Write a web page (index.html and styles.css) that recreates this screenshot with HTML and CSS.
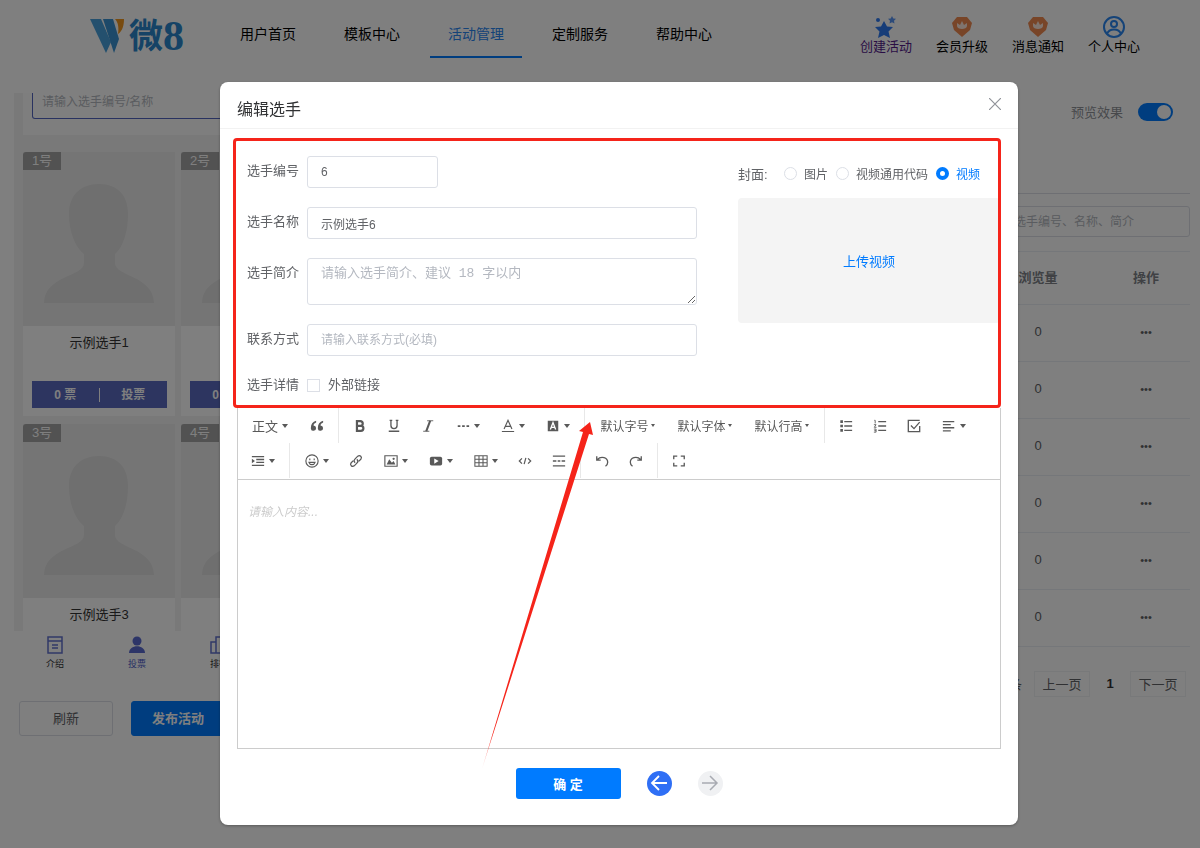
FILE: index.html
```html
<!DOCTYPE html>
<html lang="zh-CN">
<head>
<meta charset="utf-8">
<title>编辑选手</title>
<link rel="stylesheet" href="styles.css">
</head>
<body>
  <svg class="sprite" aria-hidden="true">
    <symbol id="person" viewBox="0 0 152 174">
      <path d="M76 32c19 0 29 12 29 30 0 16-4 32-13 40v9c0 14 38 12 39 40H21c1-28 40-26 40-40v-9c-10-8-15-24-15-40 0-18 11-30 30-30z"/>
    </symbol>
    <symbol id="gem" viewBox="-1 -1 22 22">
      <path d="M5 0h10l5 6-2 7-8 7-8-7-2-7z" fill="#f08a50"/>
      <path d="M5 6l3 2 2-4 2 4 3-2v3c0 4-10 4-10 0z" fill="#ffe9dc"/>
    </symbol>
  </svg>

  <header class="header">
    <a class="logo" href="#">
      <svg width="34" height="36" viewBox="0 0 34 36">
        <path d="M0 1h11l10 23-5 11z" fill="#48a0dc"/>
        <path d="M13 1h10l6 20-5 14z" fill="#3b93d2"/>
        <path d="M25 1h9c0 5-1 12-6 15 1-7 0-12-3-15z" fill="#f0961e"/>
      </svg>
      <span class="logo-text">微<b>8</b></span>
    </a>
    <nav class="nav">
      <a href="#">用户首页</a>
      <a href="#">模板中心</a>
      <a href="#" class="active">活动管理</a>
      <a href="#">定制服务</a>
      <a href="#">帮助中心</a>
    </nav>
    <div class="shortcuts">
      <a href="#" class="visited">
        <svg width="22" height="22" viewBox="0 0 22 22" fill="#2f7af0"><path d="M9 5l3 5.500 6 .5-4.500 4.500 1.500 6.500-6-3-6 3 1.500-6.500L0 11l6-.5z"/><circle cx="3" cy="4" r="2"/><path d="M17 0l1.300 2.500 2.700.3-2 2 .5 2.700L17 6.200l-2.500 1.300.5-2.700-2-2 2.700-.3z" opacity=".8"/></svg>
        创建活动
      </a>
      <a href="#"><svg width="22" height="22"><use href="#gem"/></svg>会员升级</a>
      <a href="#"><svg width="22" height="22"><use href="#gem"/></svg>消息通知</a>
      <a href="#">
        <svg width="22" height="22" viewBox="0 0 22 22" fill="none" stroke="#2a86f0" stroke-width="2"><circle cx="11" cy="11" r="10"/><circle cx="11" cy="8" r="3"/><path d="M4 18c2-6 12-6 14 0"/></svg>
        个人中心
      </a>
    </div>
  </header>

  <main class="main">
    <section class="preview">
      <div class="phone">
        <div class="phone-search"><input type="text" placeholder="请输入选手编号/名称" aria-label="搜索选手"></div>
        <div class="cards">
          <div class="card">
            <span class="badge">1号</span>
            <svg class="photo"><use href="#person"/></svg>
            <p>示例选手1</p>
            <div class="vote"><span>0 票</span><button>投票</button></div>
          </div>
          <div class="card">
            <span class="badge">2号</span>
            <svg class="photo"><use href="#person"/></svg>
            <p></p>
            <div class="vote"><span>0 票</span></div>
          </div>
          <div class="card">
            <span class="badge">3号</span>
            <svg class="photo"><use href="#person"/></svg>
            <p>示例选手3</p>
          </div>
          <div class="card">
            <span class="badge">4号</span>
            <svg class="photo"><use href="#person"/></svg>
          </div>
        </div>
        <div class="tabs">
          <a href="#"><svg width="18" height="18" viewBox="0 0 18 18" fill="none" stroke="#6272d0" stroke-width="1.500"><path d="M2 1h14v16H2zM2 5h14M6 9h6M6 12h6"/></svg>介绍</a>
          <a href="#" class="on"><svg width="18" height="18" viewBox="0 0 18 18" fill="#5a6bd0"><circle cx="9" cy="5" r="4.500"/><path d="M1 17c0-9 16-9 16 0z"/></svg>投票</a>
          <a href="#"><svg width="18" height="18" viewBox="0 0 18 18" fill="none" stroke="#6272d0" stroke-width="1.500"><path d="M1 6h5v11H1zM6 1h6v16H6zM12 8h5v9h-5z"/></svg>排行</a>
        </div>
      </div>
      <div class="preview-actions">
        <button class="btn">刷新</button>
        <button class="btn primary">发布活动</button>
      </div>
    </section>

    <section class="players">
      <div class="switch-row">
        <label for="live">预览效果</label>
        <input type="checkbox" id="live" class="switch" checked>
      </div>
      <div class="filter">
        <input type="text" placeholder="请输入选手编号、名称、简介" aria-label="筛选">
      </div>
      <table class="table">
        <thead>
          <tr><th>浏览量</th><th>操作</th></tr>
        </thead>
        <tbody>
          <tr><td>0</td><td><button>•••</button></td></tr>
          <tr><td>0</td><td><button>•••</button></td></tr>
          <tr><td>0</td><td><button>•••</button></td></tr>
          <tr><td>0</td><td><button>•••</button></td></tr>
          <tr><td>0</td><td><button>•••</button></td></tr>
          <tr><td>0</td><td><button>•••</button></td></tr>
        </tbody>
      </table>
      <div class="pager">
        <span>条</span>
        <button>上一页</button>
        <b>1</b>
        <button>下一页</button>
      </div>
    </section>
  </main>

  <div class="overlay">
    <div class="modal" role="dialog" aria-labelledby="modal-title">
      <div class="modal-header">
        <h1 id="modal-title">编辑选手</h1>
        <button class="close" aria-label="关闭">
          <svg width="12" height="12" viewBox="0 0 12 12" stroke="#909399" stroke-width="1.200"><path d="M0 0l12 12M12 0L0 12"/></svg>
        </button>
      </div>

      <form class="modal-body">
        <div class="form">
          <div class="fields">
            <div class="field">
              <label for="no">选手编号</label>
              <input type="text" id="no" class="short" value="6">
            </div>
            <div class="field">
              <label for="name">选手名称</label>
              <input type="text" id="name" value="示例选手6">
            </div>
            <div class="field">
              <label for="intro">选手简介</label>
              <textarea id="intro" placeholder="请输入选手简介、建议 18 字以内"></textarea>
            </div>
            <div class="field">
              <label for="contact">联系方式</label>
              <input type="text" id="contact" placeholder="请输入联系方式(必填)">
            </div>
            <div class="field check">
              <span class="name">选手详情</span>
              <input type="checkbox" id="link">
              <label for="link">外部链接</label>
            </div>
          </div>
          <div class="cover">
            <div class="cover-type">
              <span class="name">封面:</span>
              <label><input type="radio" name="cover">图片</label>
              <label><input type="radio" name="cover">视频通用代码</label>
              <label class="checked"><input type="radio" name="cover" checked>视频</label>
            </div>
            <button type="button" class="upload">上传视频</button>
          </div>
          <div class="highlight"></div>
        </div>

        <div class="editor">
          <div class="toolbar">
            <div class="bar">
              <button type="button" class="format">正文<i></i></button>
              <button type="button" aria-label="引用"><svg viewBox="0 0 16 16" fill="#595959"><path d="M7 2C3 3 1 6 1 10v1a3 3 0 1 0 3-3.500C4 6 5 5 7 4zM15 2c-4 1-6 4-6 8v1a3 3 0 1 0 3-3.500c0-1.500 1-2.500 3-3.500z"/></svg></button>
              <hr>
              <button type="button" aria-label="粗体"><svg viewBox="0 0 16 16" fill="none" stroke="#595959" stroke-width="2.500"><path d="M4.500 2.500h4a2.600 2.600 0 0 1 0 5.300h-4zM4.500 7.800H9a2.900 2.900 0 0 1 0 5.800H4.500z"/></svg></button>
              <button type="button" aria-label="下划线"><svg viewBox="0 0 16 16" fill="none" stroke="#595959" stroke-width="1.500"><path d="M4.500 1.500v6a3.500 3.500 0 0 0 7 0v-6M3 1.500h3M10 1.500h3M2 14h12"/></svg></button>
              <button type="button" aria-label="斜体"><svg viewBox="0 0 16 16" fill="none" stroke="#595959"><path d="M10.500 2L6 14" stroke-width="2.400"/><path d="M7 2h7M2.500 14h7"/></svg></button>
              <button type="button" class="drop" aria-label="更多"><svg viewBox="0 0 16 16" fill="#595959"><path d="M2 7h3v2H2zM7 7h3v2H7zM12 7h3v2h-3z"/></svg><i></i></button>
              <button type="button" class="drop" aria-label="文字颜色"><svg viewBox="0 0 16 16" fill="none" stroke="#595959" stroke-width="1.300"><path d="M3.500 11.500L8 1.500l4.500 10M5 8.500h6M1 14.300h14"/></svg><i></i></button>
              <button type="button" class="drop" aria-label="背景色"><svg viewBox="0 0 16 16"><path d="M2 2h12v12H2z" fill="#595959"/><path d="M5 12l3-8 3 8M6 9.500h4" fill="none" stroke="#fff" stroke-width="1.500"/></svg><i></i></button>
              <hr>
              <button type="button" class="select">默认字号<i></i></button>
              <button type="button" class="select">默认字体<i></i></button>
              <button type="button" class="select">默认行高<i></i></button>
              <hr>
              <button type="button" aria-label="无序列表"><svg viewBox="0 0 16 16" stroke="#595959" stroke-width="1.500"><path d="M6 3h9M6 8h9M6 13h9"/><path d="M1.500 3h3M1.500 8h3M1.500 13h3" stroke-width="3"/></svg></button>
              <button type="button" aria-label="有序列表"><svg viewBox="0 0 16 16" fill="none" stroke="#595959"><path d="M6 3h9M6 8h9M6 13h9" stroke-width="1.500"/><path d="M1.500 1.500h1V5M1 6.500h2.500L1.500 9.500H4M1 11.500h2.500v3.500H1M1.500 13.300h2"/></svg></button>
              <button type="button" aria-label="待办"><svg viewBox="0 0 16 16" fill="none" stroke="#595959" stroke-width="1.500"><path d="M14.500 8v6.500h-13v-13h13M4.500 7.500l3.500 3.500 6.500-7.500"/></svg></button>
              <button type="button" class="drop" aria-label="对齐"><svg viewBox="0 0 16 16" stroke="#595959" stroke-width="1.500"><path d="M1 3h13M1 6.500h9M1 10h13M1 13.500h9"/></svg><i></i></button>
            </div>
            <div class="bar">
              <button type="button" class="drop" aria-label="缩进"><svg viewBox="0 0 16 16" fill="#595959" stroke="#595959" stroke-width="1.500"><path d="M1 3h14M6 6.300h9M6 9.600h9M1 13h14"/><path d="M1 5.500L4.500 8 1 10.500z" stroke="none"/></svg><i></i></button>
              <hr>
              <button type="button" class="drop" aria-label="表情"><svg viewBox="0 0 16 16" fill="none" stroke="#595959" stroke-width="1.300"><circle cx="8" cy="8" r="7"/><path d="M5.500 5v2M10.500 5v2M4.500 9.500c1 3.500 6 3.500 7 0z"/></svg><i></i></button>
              <button type="button" aria-label="链接"><svg viewBox="0 0 16 16" fill="none" stroke="#595959" stroke-width="1.400"><path d="M7 10c-2-2-1-3.500 0-4.500l3-3c2.500-2 5.500 1 3.500 3.500L11 8.500M9 6c2 2 1 3.500 0 4.500l-3 3c-2.500 2-5.500-1-3.500-3.500L5 7.500"/></svg></button>
              <button type="button" class="drop" aria-label="图片"><svg viewBox="0 0 16 16" fill="#595959"><path d="M1 2h14v12H1z" fill="none" stroke="#595959" stroke-width="1.300"/><path d="M3 12l3-6 3 4 2-2 2 4z"/><circle cx="11" cy="5.500" r="1.300"/></svg><i></i></button>
              <button type="button" class="drop" aria-label="视频"><svg viewBox="0 0 16 16"><rect x="1" y="3" width="14" height="10" rx="2" fill="#595959"/><path d="M6 5l5 3-5 3z" fill="#fff"/></svg><i></i></button>
              <button type="button" class="drop" aria-label="表格"><svg viewBox="0 0 16 16" fill="none" stroke="#595959" stroke-width="1.200"><path d="M1 2h14v12H1zM1 6h14M1 10h14M5.700 2v12M10.300 2v12"/></svg><i></i></button>
              <button type="button" aria-label="代码"><svg viewBox="0 0 16 16" fill="none" stroke="#595959" stroke-width="1.400"><path d="M4.500 5l-3 3 3 3M11.500 5l3 3-3 3M9 4.500l-2 7"/></svg></button>
              <button type="button" aria-label="分割线"><svg viewBox="0 0 16 16" stroke="#595959" stroke-width="1.500"><path d="M1 2.500h14M1 8h4M6.500 8h3M11 8h4M1 13.500h14"/></svg></button>
              <hr>
              <button type="button" aria-label="撤销"><svg viewBox="0 0 16 16" fill="none" stroke="#595959" stroke-width="1.500"><path d="M2 2.500V7h4.500M2.500 6.500c5-5 12-2 12 3 0 2-1 3.500-2.500 4.500"/></svg></button>
              <button type="button" aria-label="重做"><svg viewBox="0 0 16 16" fill="none" stroke="#595959" stroke-width="1.500"><path d="M14 2.500V7H9.500M13.500 6.500c-5-5-12-2-12 3 0 2 1 3.500 2.500 4.500"/></svg></button>
              <hr>
              <button type="button" aria-label="全屏"><svg viewBox="0 0 16 16" fill="none" stroke="#595959" stroke-width="1.500"><path d="M2 6V2.500h4M10 2.500h4V6M14 10v3.500h-4M6 13.500H2V10"/></svg></button>
            </div>
          </div>
          <textarea class="content" placeholder="请输入内容..." aria-label="选手详情"></textarea>
        </div>

        <div class="footer">
          <button type="submit" class="ok">确 定</button>
          <button type="button" class="round prev" aria-label="上一个"><svg width="18" height="18" viewBox="0 0 18 18" fill="none" stroke="#fff" stroke-width="1.800"><path d="M17 8H2M9 1L2 8l7 7"/></svg></button>
          <button type="button" class="round" aria-label="下一个" disabled><svg width="18" height="18" viewBox="0 0 18 18" fill="none" stroke="#a8abb2" stroke-width="1.500"><path d="M1 8h15M9 1l7 7-7 7"/></svg></button>
        </div>
      </form>

      <svg class="arrow" width="120" height="350" viewBox="0 0 120 350">
        <defs>
          <linearGradient id="fade" x1="0" y1="1" x2="0" y2="0">
            <stop offset="0" stop-color="#f5241a" stop-opacity="0.200"/>
            <stop offset="0.100" stop-color="#f5241a"/>
          </linearGradient>
        </defs>
        <path d="M110 2l3 13-4-1L2 349 103 12l-4-1z" fill="url(#fade)"/>
      </svg>
    </div>
  </div>
</body>
</html>
```

FILE: styles.css
```css
* {
  box-sizing: border-box;
}

body {
  margin: 0;
  height: 100vh;
  overflow: hidden;
  background: #fff;
  color: #606266;
  font-family: "Liberation Sans", "Noto Sans CJK SC", sans-serif;
  font-size: 13px;
}

button, input, textarea {
  font-family: inherit;
  font-size: inherit;
  color: inherit;
}

button {
  padding: 0;
  border: none;
  background: none;
  cursor: pointer;
}

a {
  color: #000;
  text-decoration: none;
}

p {
  margin: 0;
}

.sprite {
  display: none;
}

/* header */
.header {
  display: flex;
  height: 93px;
  padding: 12px 60px 0 90px;
}

.logo {
  display: flex;
  align-items: center;
  gap: 5px;
  width: 132px;
  height: 48px;
  color: #2a86cc;
}

.logo-text {
  display: flex;
  align-items: center;
  font-size: 34px;
  font-weight: bold;
  line-height: 48px;
}

.logo-text b {
  font-family: "Liberation Serif", serif;
  font-size: 42px;
}

.nav {
  display: flex;
  gap: 12px;
  height: 46px;
}

.nav a {
  padding: 0 18px;
  font-size: 14px;
  line-height: 44px;
}

.nav .active {
  color: #2a86f0;
  border-bottom: 2px solid #007bff;
}

.shortcuts {
  display: flex;
  gap: 24px;
  margin-left: auto;
}

.shortcuts a {
  display: flex;
  flex-direction: column;
  align-items: center;
  padding-top: 4px;
  line-height: 18px;
}

.shortcuts .visited {
  color: #551a8b;
}

/* phone preview */
.main {
  display: flex;
  justify-content: space-between;
  padding: 0 10px 0 14px;
}

.preview {
  width: 328px;
}

.phone {
  height: 582px;
  display: flex;
  flex-direction: column;
  background: #f2f2f2;
}

.phone-search {
  margin: 0 9px 17px;
  padding: 0 9px 16px;
  background: #fcfcfc;
}

.phone-search input {
  display: block;
  width: 100%;
  height: 26px;
  padding: 0 9px 7px;
  border: 1px solid #5265c0;
  border-top: none;
  border-radius: 0 0 3px 3px;
  background: #fff;
  font-size: 12px;
}

.cards {
  flex: 1;
  display: grid;
  grid-template-columns: 152px 152px;
  gap: 8px 6px;
  padding-left: 9px;
  overflow: hidden;
}

.card {
  position: relative;
  height: 264px;
  background: #fff;
  text-align: center;
}

.badge {
  position: absolute;
  top: 0;
  left: 0;
  width: 38px;
  border-radius: 3px 0 0 0;
  background: #a4a4a4;
  color: #fff;
  line-height: 18px;
}

.photo {
  display: block;
  width: 100%;
  height: 174px;
  background: #ebebeb;
  fill: #dedede;
}

.card p {
  height: 34px;
  color: #333;
  line-height: 34px;
}

.vote {
  display: flex;
  align-items: center;
  height: 27px;
  margin: 21px 8px 0 9px;
  background: #5a6bc0;
  color: #fff;
  font-size: 12px;
  font-weight: bold;
}

.vote span, .vote button {
  width: 50%;
  height: 14px;
  font-weight: bold;
  line-height: 14px;
}

.vote span {
  border-right: 1px solid #fff;
}

.tabs {
  display: flex;
  height: 44px;
  background: #fff;
}

.tabs a {
  width: 82px;
  display: flex;
  flex-direction: column;
  align-items: center;
  padding-top: 5px;
  color: #333;
  font-size: 9px;
  line-height: 20px;
}

.tabs .on {
  color: #4a5bc8;
}

.preview-actions {
  display: flex;
  gap: 18px;
  padding: 26px 5px 0;
}

.btn {
  width: 94px;
  height: 35px;
  padding-bottom: 2px;
  border: 1px solid #dcdfe6;
  border-radius: 3px;
}

.primary {
  border-color: #007bff;
  background: #007bff;
  color: #fff;
  font-weight: bold;
}

/* players table */
.players {
  width: 228px;
}

.switch-row {
  display: flex;
  align-items: center;
  justify-content: flex-end;
  gap: 15px;
  height: 101px;
  padding: 0 17px 63px 0;
  border-bottom: 1px solid #dcdfe6;
  color: #909399;
}

.switch {
  appearance: none;
  width: 35px;
  height: 18px;
  margin: 0;
  padding: 2px;
  border-radius: 9px;
  background: #007bff;
}

.switch::before {
  content: "";
  display: block;
  width: 14px;
  height: 14px;
  margin-left: auto;
  border-radius: 50%;
  background: #fff;
}

.filter {
  padding: 12px 0 14px;
  border-bottom: 1px solid #ebeef5;
}

.filter input {
  display: block;
  width: 100%;
  height: 31px;
  padding: 0 15px;
  border: 1px solid #dcdfe6;
  border-radius: 3px;
  background: #fff;
  font-size: 12px;
}

::placeholder {
  color: #b4b8c0;
}

.table {
  width: 216px;
  margin-left: auto;
  border-collapse: collapse;
  text-align: center;
}

.table th, .table td {
  height: 57px;
  padding: 0 0 2px;
  border-bottom: 1px solid #ebeef5;
}

.table th {
  height: 52px;
  color: #808389;
}

.table th:last-child {
  width: 88px;
}

.table button {
  font-size: 11px;
}

.pager {
  display: flex;
  align-items: center;
  justify-content: flex-end;
  gap: 12px;
  padding: 24px 4px 0 0;
}

.pager button {
  width: 56px;
  height: 26px;
  border: 1px solid #f0f2f5;
}

.pager b {
  width: 16px;
  color: #303133;
  text-align: center;
}

/* modal */
.overlay {
  position: fixed;
  inset: 0;
  display: flex;
  align-items: flex-start;
  padding: 82px 182px 0 220px;
  background: rgba(0, 0, 0, 0.5);
}

.modal {
  position: relative;
  flex: 1;
  padding-bottom: 26px;
  border-radius: 8px;
  background: #fff;
  box-shadow: 0 1px 3px rgba(0, 0, 0, 0.3);
}

.modal-header {
  display: flex;
  justify-content: space-between;
  height: 47px;
  padding: 13px 17px 0;
  border-bottom: 1px solid #f2f2f2;
}

.modal-header h1 {
  margin: 0;
  color: #303133;
  font-size: 16px;
  font-weight: normal;
  line-height: 30px;
}

.close {
  width: 12px;
  height: 20px;
}

.modal-body {
  padding: 0 17px;
}

.form {
  position: relative;
  display: grid;
  grid-template-columns: 1fr 262px;
  gap: 41px;
  padding: 27px 1px 13px 0;
}

.highlight {
  position: absolute;
  inset: 9px 0 0 -4px;
  border: 3px solid #f5241a;
  border-radius: 4px;
  pointer-events: none;
}

.fields {
  display: flex;
  flex-direction: column;
  gap: 19px;
  padding-left: 10px;
}

.field {
  display: flex;
}

.field > :first-child {
  width: 60px;
  line-height: 30px;
}

.field input[type="text"], .field textarea {
  flex: 1;
  height: 32px;
  padding: 0 13px;
  border: 1px solid #dcdfe6;
  border-radius: 3px;
  background: #fff;
  font-size: 12px;
}

.field input.short[type="text"] {
  flex: none;
  width: 131px;
}

.field textarea {
  height: 47px;
  padding-top: 3px;
  font-family: "Liberation Mono", "Noto Sans CJK SC", monospace;
  font-size: 13px;
}

.field.check {
  align-items: center;
}

.check > :first-child, .check label {
  line-height: 20px;
}

input[type="radio"], .field input[type="checkbox"] {
  appearance: none;
  width: 13px;
  height: 13px;
  margin: 0 8px 0 0;
  border: 1px solid #dcdfe6;
  background: #fff;
}

input[type="radio"] {
  margin-right: 7px;
  border-radius: 50%;
}

input[type="radio"]:checked {
  border: 4px solid #007bff;
}

.cover-type {
  display: flex;
  align-items: center;
  gap: 8px;
  height: 34px;
  font-size: 12px;
}

.cover-type .name {
  width: 38px;
  font-size: 13px;
}

.cover-type label {
  display: flex;
  align-items: center;
}

.cover-type .checked, .upload {
  color: #007bff;
}

.upload {
  width: 100%;
  height: 125px;
  margin-top: 8px;
  border-radius: 4px;
  background: #f4f4f4;
}

/* rich text editor */
.editor {
  border: 1px solid #ccc;
  border-top: none;
}

.toolbar {
  padding: 0 2px 1px;
  border-bottom: 1px solid #ccc;
}

.bar {
  display: flex;
  height: 35px;
}

.bar hr {
  width: 1px;
  margin: 0 4px;
  border: none;
  background: #e8e8e8;
}

.bar button {
  display: flex;
  align-items: center;
  justify-content: center;
  gap: 4px;
  width: 34px;
  color: #595959;
}

.bar svg {
  width: 14px;
  height: 14px;
}

.bar .format {
  width: 60px;
}

.bar .drop {
  width: 45px;
}

.bar .select {
  gap: 2px;
  width: 77px;
  font-size: 12px;
}

.bar i {
  border: 3px solid transparent;
  border-top: 4px solid #595959;
  border-bottom: none;
}

.bar .select i {
  border-width: 3px 2px 0;
}

.content {
  display: block;
  width: 100%;
  height: 268px;
  padding: 22px 10px;
  border: none;
  resize: none;
}

.content::placeholder {
  color: #ccc;
  font-size: 12px;
  font-style: italic;
}

.footer {
  display: flex;
  align-items: center;
  justify-content: center;
  gap: 26px;
  padding-top: 19px;
}

.ok {
  width: 105px;
  height: 31px;
  border-radius: 3px;
  background: #007bff;
  color: #fff;
  font-weight: bold;
}

.round {
  display: flex;
  align-items: center;
  justify-content: center;
  width: 25px;
  height: 25px;
  border-radius: 50%;
  background: #f0f1f3;
}

.prev {
  background: #2f6ff5;
}

/* arrow drawn over the form and the editor */
.arrow {
  position: absolute;
  top: 338px;
  left: 260px;
  pointer-events: none;
}
```
